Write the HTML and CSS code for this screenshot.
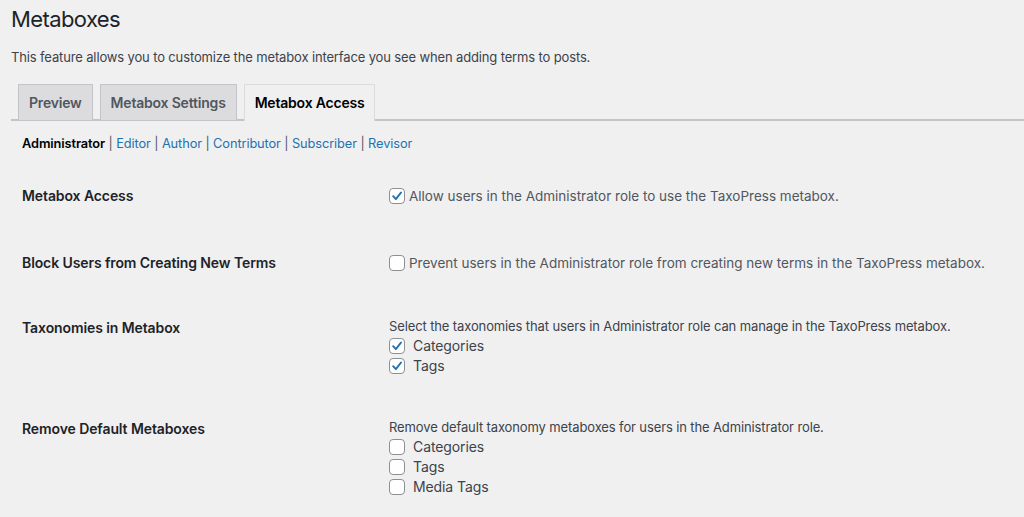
FILE: index.html
```html
<!DOCTYPE html>
<html>
<head>
<meta charset="utf-8">
<link rel="stylesheet" href="styles.css">
</head>
<body>
<div class="wrap">
  <h1 class="title">Metaboxes</h1>
  <p class="intro">This feature allows you to customize the metabox interface you see when adding terms to posts.</p>
  <nav class="tabs">
    <a class="tab">Preview</a>
    <a class="tab">Metabox Settings</a>
    <a class="tab tab-active">Metabox Access</a>
  </nav>
  <div class="panel">
    <div class="roles">
      <span class="role-current">Administrator</span><span class="sep">|</span><a class="role">Editor</a><span class="sep">|</span><a class="role">Author</a><span class="sep">|</span><a class="role">Contributor</a><span class="sep">|</span><a class="role">Subscriber</a><span class="sep">|</span><a class="role">Revisor</a>
    </div>
    <div class="row row-1">
      <div class="label">Metabox Access</div>
      <div class="field">
        <label class="check"><span class="box checked"><svg viewBox="0 0 16 16"><path d="M3.6 8.2 L6.7 11.6 L12.6 4"/></svg></span>Allow users in the Administrator role to use the TaxoPress metabox.</label>
      </div>
    </div>
    <div class="row row-2">
      <div class="label">Block Users from Creating New Terms</div>
      <div class="field">
        <label class="check"><span class="box"></span>Prevent users in the Administrator role from creating new terms in the TaxoPress metabox.</label>
      </div>
    </div>
    <div class="row row-3">
      <div class="label">Taxonomies in Metabox</div>
      <div class="field">
        <div class="desc">Select the taxonomies that users in Administrator role can manage in the TaxoPress metabox.</div>
        <label class="check item"><span class="box checked"><svg viewBox="0 0 16 16"><path d="M3.6 8.2 L6.7 11.6 L12.6 4"/></svg></span>Categories</label>
        <label class="check item"><span class="box checked"><svg viewBox="0 0 16 16"><path d="M3.6 8.2 L6.7 11.6 L12.6 4"/></svg></span>Tags</label>
      </div>
    </div>
    <div class="row row-4">
      <div class="label">Remove Default Metaboxes</div>
      <div class="field">
        <div class="desc">Remove default taxonomy metaboxes for users in the Administrator role.</div>
        <label class="check item"><span class="box"></span>Categories</label>
        <label class="check item"><span class="box"></span>Tags</label>
        <label class="check item"><span class="box"></span>Media Tags</label>
      </div>
    </div>
  </div>
</div>
</body>
</html>
```

FILE: styles.css
```css
html, body {
  margin: 0;
  padding: 0;
  background: #f0f0f1;
}
body {
  font-family: Inter, "Noto Sans", "Liberation Sans", sans-serif;
  color: #3c434a;
  font-size: 14px;
  height: 517px;
  overflow: hidden;
}
.wrap {
  padding: 0 0 0 11px;
}
.title {
  margin: 0;
  padding-top: 5px;
  font-size: 22px;
  line-height: 29px;
  font-weight: 400;
  color: #1d2327;
  letter-spacing: -0.6px;
}
.intro {
  margin: 13px 0 0 0;
  font-size: 13px;
  line-height: 20px;
  color: #3c434a;
  letter-spacing: -0.14px;
}
.tabs {
  display: flex;
  gap: 7px;
  margin-top: 17px;
  padding-left: 7px;
  border-bottom: 2px solid #c3c4c7;
  height: 35px;
}
.tab {
  display: block;
  box-sizing: border-box;
  height: 36px;
  padding: 0 10px;
  line-height: 35px;
  font-size: 14px;
  font-weight: 600;
  letter-spacing: -0.2px;
  color: #50575e;
  background: #dcdcde;
  border: 1px solid #c3c4c7;
  border-bottom: none;
}
.tab-active {
  background: #f0f0f1;
  color: #000;
  border-color: #dcdcde;
  height: 37px;
}
.panel {
  padding-left: 11px;
}
.roles {
  margin-top: 13px;
  font-size: 12.8px;
  line-height: 20px;
  letter-spacing: -0.1px;
}
.role-current {
  font-weight: 600;
  color: #000;
}
.role {
  color: #2271b1;
}
.sep {
  color: #50575e;
  margin: 0 3.5px;
}
.row {
  display: grid;
  grid-template-columns: 367px 1fr;
}
.row-1 { margin-top: 32px; }
.row-2 { margin-top: 47px; }
.row-3 { margin-top: 43px; }
.row-4 { margin-top: 41px; }
.label {
  font-weight: 600;
  color: #1d2327;
  font-size: 14px;
  line-height: 20px;
  letter-spacing: -0.1px;
}
.row-3 .label, .row-4 .label { padding-top: 2px; }
.field {
  display: flex;
  flex-direction: column;
  font-size: 13.5px;
  line-height: 20px;
}
.desc {
  font-size: 13px;
  line-height: 20px;
  color: #3c434a;
  letter-spacing: -0.12px;
}
.check {
  display: flex;
  align-items: center;
  color: #50575e;
}
.item {
  color: #3c434a;
  font-size: 14px;
  letter-spacing: -0.1px;
}
.box {
  box-sizing: border-box;
  width: 16px;
  height: 16px;
  border: 1px solid #8c8f94;
  border-radius: 4px;
  background: #fff;
  margin-right: 4px;
  flex: none;
  display: flex;
}
.item .box {
  margin-right: 8px;
}
.box svg {
  width: 14px;
  height: 14px;
}
.box path {
  fill: none;
  stroke: #2271b1;
  stroke-width: 2.2;
  stroke-linecap: round;
  stroke-linejoin: round;
}
```
